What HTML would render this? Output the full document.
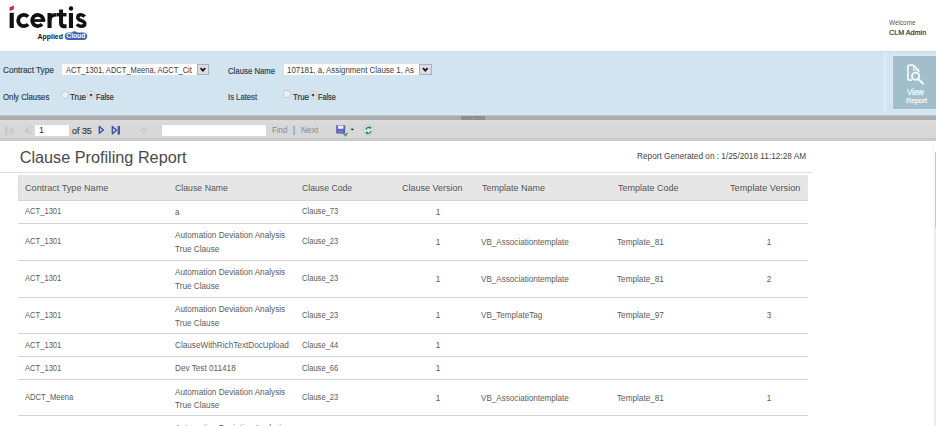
<!DOCTYPE html>
<html><head><meta charset="utf-8"><style>
html,body{margin:0;padding:0;}
body{width:936px;height:426px;overflow:hidden;position:relative;background:#fff;font-family:"Liberation Sans", sans-serif;}
.t{position:absolute;white-space:nowrap;}
.s{-webkit-text-stroke:0.2px currentColor;}
.r{position:absolute;}
</style></head><body>
<div class="r" style="left:0px;top:51px;width:936px;height:64px;background:#d3e4f1;"></div>
<div class="r" style="left:0px;top:51px;width:936px;height:1px;background:#cdd9e3;"></div>
<div class="r" style="left:0px;top:113px;width:936px;height:2px;background:#d9e7f3;"></div>
<div class="r" style="left:0px;top:115px;width:936px;height:5px;background:linear-gradient(#c6d0d7 0px,#b2b7bb 1px,#a9abae 2px,#aaacae 4.5px,#c4c5c6 5px);"></div>
<div class="r" style="left:0px;top:120px;width:936px;height:18px;background:linear-gradient(#dbdbdb 0px,#dbdbdb 3px,#d8d8d8 4px);"></div>
<div class="r" style="left:0px;top:137px;width:936px;height:1px;background:#d5d5d5;"></div>
<div class="r" style="left:0px;top:138px;width:936px;height:3px;background:#c9c9c9;"></div>
<div class="r" style="left:883px;top:52px;width:4px;height:63px;background:linear-gradient(90deg,#d6e7f2,#dcebf5 50%,#d6e7f2);"></div>
<div class="r" style="left:892px;top:55px;width:44px;height:55px;background:#d9eaf4;"></div>
<div class="r" style="left:893px;top:56px;width:43px;height:53px;background:#a0bfca;"></div>
<div class="r" style="left:935px;top:152px;width:1px;height:76px;background:#c6c6c6;"></div>
<div class="r" style="left:933px;top:142px;width:1px;height:86px;background:#f3f3f3;"></div>
<div class="r" style="left:934px;top:228px;width:2px;height:198px;background:linear-gradient(90deg,#f4f4f4,#e6e6e6);"></div>
<div class="r" style="left:461px;top:116px;width:24px;height:4px;background:#8c8f92;"></div>
<div class="r" style="left:472.5px;top:117.5px;width:1.5px;height:1.5px;background:#d8d8d8;"></div>
<div class="t " style="left:888.5px;top:19.75px;font-size:6.91px;line-height:6.91px;color:#555;font-weight:normal;transform:scaleX(0.9259);transform-origin:0 0;">Welcome</div>
<div class="t s" style="left:888.5px;top:28.82px;font-size:7.78px;line-height:7.78px;color:#333;font-weight:normal;transform:scaleX(0.9259);transform-origin:0 0;">CLM Admin</div>
<div class="t s" style="left:3px;top:66.20px;font-size:8.86px;line-height:8.86px;color:#34444f;font-weight:normal;transform:scaleX(0.9259);transform-origin:0 0;">Contract Type</div>
<div class="t s" style="left:3px;top:93.37px;font-size:8.42px;line-height:8.42px;color:#34444f;font-weight:normal;transform:scaleX(0.9259);transform-origin:0 0;">Only Clauses</div>
<div class="t s" style="left:228.3px;top:66.57px;font-size:8.42px;line-height:8.42px;color:#34444f;font-weight:normal;transform:scaleX(0.9259);transform-origin:0 0;">Clause Name</div>
<div class="t s" style="left:228.3px;top:93.46px;font-size:8.32px;line-height:8.32px;color:#34444f;font-weight:normal;transform:scaleX(0.9259);transform-origin:0 0;">Is Latest</div>
<div class="r" style="left:62px;top:64px;width:135px;height:11px;background:#fff;"></div>
<div class="t " style="left:65.8px;top:66.44px;font-size:8.46px;line-height:8.46px;color:#3a3a3a;font-weight:normal;transform:scaleX(0.8929);transform-origin:0 0;">ACT_1301, ADCT_Meena, AGCT_Cit</div>
<div class="r" style="left:197px;top:63.5px;width:11.5px;height:11.5px;background:#dcdce6;border:1px solid #aeaeba;box-sizing:border-box;"></div>
<div class="r" style="left:283.5px;top:64px;width:135.5px;height:11px;background:#fff;"></div>
<div class="t " style="left:287.2px;top:66.11px;font-size:8.85px;line-height:8.85px;color:#3a3a3a;font-weight:normal;transform:scaleX(0.8929);transform-origin:0 0;">107181, a, Assignment Clause 1, As</div>
<div class="r" style="left:419px;top:63.5px;width:12.5px;height:11.5px;background:#dcdce6;border:1px solid #aeaeba;box-sizing:border-box;"></div>
<svg class="r" style="left:0;top:60px" width="440" height="20" viewBox="0 60 440 20"><path d="M 200.6 68.2 L 202.9 70.6 L 205.2 68.2" fill="none" stroke="#1a1a1a" stroke-width="1.9"/><path d="M 423 68.2 L 425.3 70.6 L 427.6 68.2" fill="none" stroke="#1a1a1a" stroke-width="1.9"/></svg>
<svg class="r" style="left:60px;top:89.5px" width="10" height="10"><circle cx="5" cy="5" r="3.7" fill="#eef1f4" stroke="#c3c8cd" stroke-width="1"/></svg>
<div class="t s" style="left:70px;top:93.08px;font-size:8.53px;line-height:8.53px;color:#333;font-weight:normal;transform:scaleX(0.9259);transform-origin:0 0;">True</div>
<svg class="r" style="left:86px;top:90px" width="10" height="10"><circle cx="5" cy="5" r="3.7" fill="#eef1f4" stroke="#c3c8cd" stroke-width="1"/><circle cx="5" cy="5" r="1.6" fill="#555"/></svg>
<div class="t s" style="left:96px;top:93.13px;font-size:8.47px;line-height:8.47px;color:#333;font-weight:normal;transform:scaleX(0.8547);transform-origin:0 0;">False</div>
<svg class="r" style="left:282.3px;top:89.4px" width="10" height="10"><circle cx="5" cy="5" r="3.7" fill="#eef1f4" stroke="#c3c8cd" stroke-width="1"/></svg>
<div class="t s" style="left:293px;top:93.08px;font-size:8.53px;line-height:8.53px;color:#333;font-weight:normal;transform:scaleX(0.9259);transform-origin:0 0;">True</div>
<svg class="r" style="left:308.3px;top:89.8px" width="10" height="10"><circle cx="5" cy="5" r="3.7" fill="#eef1f4" stroke="#c3c8cd" stroke-width="1"/><circle cx="5" cy="5" r="1.6" fill="#555"/></svg>
<div class="t s" style="left:318.3px;top:93.13px;font-size:8.47px;line-height:8.47px;color:#333;font-weight:normal;transform:scaleX(0.8547);transform-origin:0 0;">False</div>
<div class="r" style="left:34.5px;top:124.7px;width:34px;height:11px;background:#fff;"></div>
<div class="t " style="left:39px;top:125.37px;font-size:9.72px;line-height:9.72px;color:#333;font-weight:normal;transform:scaleX(0.9259);transform-origin:0 0;">1</div>
<div class="t s" style="left:72.1px;top:125.56px;font-size:9.61px;line-height:9.61px;color:#3a3a3a;font-weight:normal;transform:scaleX(0.9259);transform-origin:0 0;">of 35</div>
<div class="r" style="left:162.3px;top:124.8px;width:103.7px;height:10.8px;background:#fff;"></div>
<div class="t " style="left:271.7px;top:125.98px;font-size:8.53px;line-height:8.53px;color:#8a8a8a;font-weight:normal;transform:scaleX(0.9259);transform-origin:0 0;">Find</div>
<div class="t " style="left:293px;top:125.89px;font-size:8.64px;line-height:8.64px;color:#666;font-weight:normal;transform:scaleX(0.9259);transform-origin:0 0;">|</div>
<div class="t " style="left:300.8px;top:125.52px;font-size:9.07px;line-height:9.07px;color:#8a8a8a;font-weight:normal;transform:scaleX(0.9259);transform-origin:0 0;">Next</div>
<svg class="r" style="left:0;top:120px" width="400" height="20" viewBox="0 120 400 20">
<rect x="5.3" y="126.5" width="2" height="8.5" fill="#c4c4c4"/>
<polygon points="13.3,126.5 8,130.8 13.3,135" fill="#cbcbcb"/>
<polygon points="28.5,126.5 24.3,130.8 28.5,135" fill="#c6c6c6"/>
<rect x="28.5" y="126.5" width="4" height="8.5" fill="#d2d2d2"/>
<polygon points="99.3,126.5 103.5,129.9 99.3,133.3" fill="#b8c8f0" stroke="#3a4f9e" stroke-width="1.3" stroke-linejoin="round"/>
<polygon points="112.3,126.5 116.6,130.2 112.3,133.9" fill="#b8c8f0" stroke="#3a4f9e" stroke-width="1.3" stroke-linejoin="round"/>
<rect x="117.6" y="126" width="2.4" height="8.5" fill="#3a5ca8"/>
<path d="M 140.5 131 L 143 128 L 145 130.5 L 143 134" fill="none" stroke="#c8c8c8" stroke-width="1.4"/>
<rect x="336.2" y="125.2" width="9" height="8.3" fill="#5a63b8"/>
<rect x="338" y="125.6" width="5.4" height="3.2" fill="#eef0ff"/>
<rect x="338.4" y="130.2" width="4.5" height="3.3" fill="#6d79c8"/>
<path d="M 342.5 133 L 346.5 136 M 344.8 136 L 347.5 133" stroke="#4a9a5a" stroke-width="1.4" fill="none"/>
<polygon points="350.6,128.8 354,128.8 352.3,130.6" fill="#111"/>
<circle cx="368.5" cy="130.3" r="5" fill="#d3ece4" stroke="#a9cfc6" stroke-width="0.9"/>
<path d="M 366 129.8 C 366 127.8, 368 126.9, 370 127.6 M 371 130.8 C 371 132.8, 369 133.7, 367 133" fill="none" stroke="#2e6e48" stroke-width="1.2"/>
<polygon points="369.5,126.2 371.8,128 369.3,129" fill="#2e6e48"/>
<polygon points="367.5,134.4 365.2,132.6 367.7,131.6" fill="#2e6e48"/>
</svg>
<div class="t " style="left:19.7px;top:148.55px;font-size:16.24px;line-height:16.24px;color:#4a4a4a;font-weight:normal;">Clause Profiling Report</div>
<div class="t " style="left:637.1px;top:152.46px;font-size:8.91px;line-height:8.91px;color:#444;font-weight:normal;transform:scaleX(0.9259);transform-origin:0 0;">Report Generated on : 1/25/2018 11:12:28 AM</div>
<div class="r" style="left:0px;top:172px;width:813px;height:1px;background:#dedede;"></div>
<div class="r" style="left:18px;top:175px;width:790px;height:25px;background:#e6e6e6;"></div>
<div class="r" style="left:18px;top:175px;width:4px;height:25px;background:linear-gradient(90deg,#d9d9d9,#e2e2e2 1px,#e4e4e4 3px,#e6e6e6);"></div>
<div class="r" style="left:18px;top:200px;width:790px;height:1px;background:#d4d4d4;"></div>
<div class="t " style="left:25px;top:182.98px;font-size:9.83px;line-height:9.83px;color:#555;font-weight:normal;transform:scaleX(0.9259);transform-origin:0 0;">Contract Type Name</div>
<div class="t " style="left:174.5px;top:183.30px;font-size:9.45px;line-height:9.45px;color:#555;font-weight:normal;transform:scaleX(0.9259);transform-origin:0 0;">Clause Name</div>
<div class="t " style="left:301.5px;top:183.35px;font-size:9.40px;line-height:9.40px;color:#555;font-weight:normal;transform:scaleX(0.9259);transform-origin:0 0;">Clause Code</div>
<div class="t " style="left:402.4px;top:183.07px;font-size:9.72px;line-height:9.72px;color:#555;font-weight:normal;transform:scaleX(0.9259);transform-origin:0 0;">Clause Version</div>
<div class="t " style="left:481.5px;top:183.07px;font-size:9.72px;line-height:9.72px;color:#555;font-weight:normal;transform:scaleX(0.9259);transform-origin:0 0;">Template Name</div>
<div class="t " style="left:617.6px;top:183.07px;font-size:9.72px;line-height:9.72px;color:#555;font-weight:normal;transform:scaleX(0.9259);transform-origin:0 0;">Template Code</div>
<div class="t " style="left:730.4px;top:182.89px;font-size:9.94px;line-height:9.94px;color:#555;font-weight:normal;transform:scaleX(0.9259);transform-origin:0 0;">Template Version</div>
<div class="r" style="left:18px;top:223px;width:790px;height:1px;background:#d2d2d2;"></div>
<div class="r" style="left:18px;top:260px;width:790px;height:1px;background:#d2d2d2;"></div>
<div class="r" style="left:18px;top:297px;width:790px;height:1px;background:#d2d2d2;"></div>
<div class="r" style="left:18px;top:333px;width:790px;height:1px;background:#d2d2d2;"></div>
<div class="r" style="left:18px;top:356px;width:790px;height:1px;background:#d2d2d2;"></div>
<div class="r" style="left:18px;top:379px;width:790px;height:1px;background:#d2d2d2;"></div>
<div class="r" style="left:18px;top:415px;width:790px;height:1px;background:#d2d2d2;"></div>
<div class="t " style="left:25px;top:208.15px;font-size:8.21px;line-height:8.21px;color:#5c5c5c;font-weight:normal;transform:scaleX(0.9259);transform-origin:0 0;">ACT_1301</div>
<div class="t " style="left:174.5px;top:207.60px;font-size:8.86px;line-height:8.86px;color:#5c5c5c;font-weight:normal;transform:scaleX(0.9259);transform-origin:0 0;">a</div>
<div class="t " style="left:301.5px;top:208.15px;font-size:8.21px;line-height:8.21px;color:#5c5c5c;font-weight:normal;transform:scaleX(0.9259);transform-origin:0 0;">Clause_73</div>
<div class="t" style="left:338px;width:200px;text-align:center;top:207.60px;font-size:8.86px;line-height:8.86px;color:#5c5c5c;font-weight:normal;transform:scaleX(0.9259);transform-origin:50% 0;">1</div>
<div class="t " style="left:25px;top:238.15px;font-size:8.21px;line-height:8.21px;color:#5c5c5c;font-weight:normal;transform:scaleX(0.9259);transform-origin:0 0;">ACT_1301</div>
<div class="t " style="left:174.5px;top:231.40px;font-size:8.86px;line-height:8.86px;color:#5c5c5c;font-weight:normal;transform:scaleX(0.9259);transform-origin:0 0;">Automation Deviation Analysis</div>
<div class="t " style="left:174.5px;top:245.10px;font-size:8.86px;line-height:8.86px;color:#5c5c5c;font-weight:normal;transform:scaleX(0.9259);transform-origin:0 0;">True Clause</div>
<div class="t " style="left:301.5px;top:238.15px;font-size:8.21px;line-height:8.21px;color:#5c5c5c;font-weight:normal;transform:scaleX(0.9259);transform-origin:0 0;">Clause_23</div>
<div class="t" style="left:338px;width:200px;text-align:center;top:237.60px;font-size:8.86px;line-height:8.86px;color:#5c5c5c;font-weight:normal;transform:scaleX(0.9259);transform-origin:50% 0;">1</div>
<div class="t " style="left:480.8px;top:237.69px;font-size:8.75px;line-height:8.75px;color:#5c5c5c;font-weight:normal;transform:scaleX(0.9259);transform-origin:0 0;">VB_Associationtemplate</div>
<div class="t " style="left:617.2px;top:237.60px;font-size:8.86px;line-height:8.86px;color:#5c5c5c;font-weight:normal;transform:scaleX(0.9259);transform-origin:0 0;">Template_81</div>
<div class="t" style="left:669.2px;width:200px;text-align:center;top:237.60px;font-size:8.86px;line-height:8.86px;color:#5c5c5c;font-weight:normal;transform:scaleX(0.9259);transform-origin:50% 0;">1</div>
<div class="t " style="left:25px;top:275.15px;font-size:8.21px;line-height:8.21px;color:#5c5c5c;font-weight:normal;transform:scaleX(0.9259);transform-origin:0 0;">ACT_1301</div>
<div class="t " style="left:174.5px;top:268.40px;font-size:8.86px;line-height:8.86px;color:#5c5c5c;font-weight:normal;transform:scaleX(0.9259);transform-origin:0 0;">Automation Deviation Analysis</div>
<div class="t " style="left:174.5px;top:282.10px;font-size:8.86px;line-height:8.86px;color:#5c5c5c;font-weight:normal;transform:scaleX(0.9259);transform-origin:0 0;">True Clause</div>
<div class="t " style="left:301.5px;top:275.15px;font-size:8.21px;line-height:8.21px;color:#5c5c5c;font-weight:normal;transform:scaleX(0.9259);transform-origin:0 0;">Clause_23</div>
<div class="t" style="left:338px;width:200px;text-align:center;top:274.60px;font-size:8.86px;line-height:8.86px;color:#5c5c5c;font-weight:normal;transform:scaleX(0.9259);transform-origin:50% 0;">1</div>
<div class="t " style="left:480.8px;top:274.69px;font-size:8.75px;line-height:8.75px;color:#5c5c5c;font-weight:normal;transform:scaleX(0.9259);transform-origin:0 0;">VB_Associationtemplate</div>
<div class="t " style="left:617.2px;top:274.60px;font-size:8.86px;line-height:8.86px;color:#5c5c5c;font-weight:normal;transform:scaleX(0.9259);transform-origin:0 0;">Template_81</div>
<div class="t" style="left:669.2px;width:200px;text-align:center;top:274.60px;font-size:8.86px;line-height:8.86px;color:#5c5c5c;font-weight:normal;transform:scaleX(0.9259);transform-origin:50% 0;">2</div>
<div class="t " style="left:25px;top:311.90px;font-size:8.21px;line-height:8.21px;color:#5c5c5c;font-weight:normal;transform:scaleX(0.9259);transform-origin:0 0;">ACT_1301</div>
<div class="t " style="left:174.5px;top:305.15px;font-size:8.86px;line-height:8.86px;color:#5c5c5c;font-weight:normal;transform:scaleX(0.9259);transform-origin:0 0;">Automation Deviation Analysis</div>
<div class="t " style="left:174.5px;top:318.85px;font-size:8.86px;line-height:8.86px;color:#5c5c5c;font-weight:normal;transform:scaleX(0.9259);transform-origin:0 0;">True Clause</div>
<div class="t " style="left:301.5px;top:311.90px;font-size:8.21px;line-height:8.21px;color:#5c5c5c;font-weight:normal;transform:scaleX(0.9259);transform-origin:0 0;">Clause_23</div>
<div class="t" style="left:338px;width:200px;text-align:center;top:311.35px;font-size:8.86px;line-height:8.86px;color:#5c5c5c;font-weight:normal;transform:scaleX(0.9259);transform-origin:50% 0;">1</div>
<div class="t " style="left:480.8px;top:311.44px;font-size:8.75px;line-height:8.75px;color:#5c5c5c;font-weight:normal;transform:scaleX(0.9259);transform-origin:0 0;">VB_TemplateTag</div>
<div class="t " style="left:617.2px;top:311.35px;font-size:8.86px;line-height:8.86px;color:#5c5c5c;font-weight:normal;transform:scaleX(0.9259);transform-origin:0 0;">Template_97</div>
<div class="t" style="left:669.2px;width:200px;text-align:center;top:311.35px;font-size:8.86px;line-height:8.86px;color:#5c5c5c;font-weight:normal;transform:scaleX(0.9259);transform-origin:50% 0;">3</div>
<div class="t " style="left:25px;top:341.70px;font-size:8.21px;line-height:8.21px;color:#5c5c5c;font-weight:normal;transform:scaleX(0.9259);transform-origin:0 0;">ACT_1301</div>
<div class="t " style="left:174.5px;top:341.15px;font-size:8.86px;line-height:8.86px;color:#5c5c5c;font-weight:normal;transform:scaleX(0.9259);transform-origin:0 0;">ClauseWithRichTextDocUpload</div>
<div class="t " style="left:301.5px;top:341.70px;font-size:8.21px;line-height:8.21px;color:#5c5c5c;font-weight:normal;transform:scaleX(0.9259);transform-origin:0 0;">Clause_44</div>
<div class="t" style="left:338px;width:200px;text-align:center;top:341.15px;font-size:8.86px;line-height:8.86px;color:#5c5c5c;font-weight:normal;transform:scaleX(0.9259);transform-origin:50% 0;">1</div>
<div class="t " style="left:25px;top:364.75px;font-size:8.21px;line-height:8.21px;color:#5c5c5c;font-weight:normal;transform:scaleX(0.9259);transform-origin:0 0;">ACT_1301</div>
<div class="t " style="left:174.5px;top:364.20px;font-size:8.86px;line-height:8.86px;color:#5c5c5c;font-weight:normal;transform:scaleX(0.9259);transform-origin:0 0;">Dev Test 011418</div>
<div class="t " style="left:301.5px;top:364.75px;font-size:8.21px;line-height:8.21px;color:#5c5c5c;font-weight:normal;transform:scaleX(0.9259);transform-origin:0 0;">Clause_66</div>
<div class="t" style="left:338px;width:200px;text-align:center;top:364.20px;font-size:8.86px;line-height:8.86px;color:#5c5c5c;font-weight:normal;transform:scaleX(0.9259);transform-origin:50% 0;">1</div>
<div class="t " style="left:25px;top:394.30px;font-size:8.21px;line-height:8.21px;color:#5c5c5c;font-weight:normal;transform:scaleX(0.9259);transform-origin:0 0;">ADCT_Meena</div>
<div class="t " style="left:174.5px;top:387.55px;font-size:8.86px;line-height:8.86px;color:#5c5c5c;font-weight:normal;transform:scaleX(0.9259);transform-origin:0 0;">Automation Deviation Analysis</div>
<div class="t " style="left:174.5px;top:401.25px;font-size:8.86px;line-height:8.86px;color:#5c5c5c;font-weight:normal;transform:scaleX(0.9259);transform-origin:0 0;">True Clause</div>
<div class="t " style="left:301.5px;top:394.30px;font-size:8.21px;line-height:8.21px;color:#5c5c5c;font-weight:normal;transform:scaleX(0.9259);transform-origin:0 0;">Clause_23</div>
<div class="t" style="left:338px;width:200px;text-align:center;top:393.75px;font-size:8.86px;line-height:8.86px;color:#5c5c5c;font-weight:normal;transform:scaleX(0.9259);transform-origin:50% 0;">1</div>
<div class="t " style="left:480.8px;top:393.84px;font-size:8.75px;line-height:8.75px;color:#5c5c5c;font-weight:normal;transform:scaleX(0.9259);transform-origin:0 0;">VB_Associationtemplate</div>
<div class="t " style="left:617.2px;top:393.75px;font-size:8.86px;line-height:8.86px;color:#5c5c5c;font-weight:normal;transform:scaleX(0.9259);transform-origin:0 0;">Template_81</div>
<div class="t" style="left:669.2px;width:200px;text-align:center;top:393.75px;font-size:8.86px;line-height:8.86px;color:#5c5c5c;font-weight:normal;transform:scaleX(0.9259);transform-origin:50% 0;">1</div>
<div class="t " style="left:174.5px;top:423.85px;font-size:8.86px;line-height:8.86px;color:#5c5c5c;font-weight:normal;transform:scaleX(0.9259);transform-origin:0 0;">Automation Deviation Analysis</div>
<div class="t " style="left:174.5px;top:437.55px;font-size:8.86px;line-height:8.86px;color:#5c5c5c;font-weight:normal;transform:scaleX(0.9259);transform-origin:0 0;">True Clause</div>
<svg class="r" style="left:0;top:0" width="100" height="45" viewBox="0 0 100 45">
<polygon points="9.6,7.3 13.8,5.6 13.8,9.5 9.6,11.1" fill="#e2203c"/>
<rect x="9.6" y="12.8" width="4.2" height="15.2" fill="#111"/>
<path d="M 28.05 16.77 A 5.65 5.65 0 1 0 28.05 24.33" fill="none" stroke="#111" stroke-width="3.8"/>
<path d="M 43.3 20.5 A 5.6 5.6 0 1 0 41.99 24.1" fill="none" stroke="#111" stroke-width="3.8"/>
<rect x="32" y="19.2" width="13.2" height="2.7" fill="#111"/>
<rect x="47.5" y="13" width="4.1" height="15" fill="#111"/>
<path d="M 49.55 21 C 49.55 16.5, 52 14.8, 56.6 14.8" fill="none" stroke="#111" stroke-width="3.6"/>
<path d="M 61.05 9.4 L 61.05 23.2 C 61.05 25.4, 62.3 26.2, 64.2 26.2 L 66.6 26.2" fill="none" stroke="#111" stroke-width="4"/>
<rect x="56.8" y="13" width="9.7" height="3.4" fill="#111"/>
<circle cx="71" cy="8.5" r="2.2" fill="#111"/>
<rect x="68.9" y="13" width="4.1" height="15" fill="#111"/>
<path d="M 84.6 16.6 C 83.6 15.3, 82.2 14.75, 80.8 14.75 C 78.9 14.75, 77.8 15.9, 77.8 17.4 C 77.8 19.5, 79.9 20.1, 81.4 20.6 C 83.1 21.1, 84.8 21.8, 84.8 23.7 C 84.8 25.3, 83.3 26.25, 81 26.25 C 79.3 26.25, 77.9 25.5, 77 24.3" fill="none" stroke="#111" stroke-width="3.5"/>
<rect x="64.8" y="32.6" width="22.3" height="7.3" rx="3.6" fill="#3466bc"/>
<ellipse cx="74.4" cy="32.7" rx="2.6" ry="1.5" fill="#3466bc"/>
</svg>
<div class="t " style="left:37.6px;top:34.06px;font-size:6.90px;line-height:6.90px;color:#111;font-weight:bold;">Applied</div>
<div class="t " style="left:66.3px;top:33.23px;font-size:6.70px;line-height:6.70px;color:#fff;font-weight:bold;">Cloud</div>
<svg class="r" style="left:893px;top:56px" width="43" height="53" viewBox="893 56 43 53">
<path d="M 913.2 65.2 L 909.6 65.2 C 908.5 65.2, 907.9 66, 907.9 67 L 907.9 78.3 C 907.9 79.4, 908.6 80.1, 909.6 80.1 L 911.8 80.1" fill="none" stroke="#f4f8fa" stroke-width="1.7"/>
<path d="M 913.2 65.2 L 918.6 70.4 L 918.6 72.2" fill="none" stroke="#f4f8fa" stroke-width="1.7"/>
<path d="M 913.6 65.6 L 913.6 70 L 918.2 70" fill="none" stroke="#f4f8fa" stroke-width="1.2"/>
<circle cx="915.6" cy="76.2" r="3.6" fill="none" stroke="#f4f8fa" stroke-width="1.9"/>
<path d="M 918.2 78.8 L 922.9 83.5" stroke="#f4f8fa" stroke-width="2.2" stroke-linecap="round"/>
</svg>
<div class="t " style="left:906.7px;top:87.97px;font-size:8.42px;line-height:8.42px;color:#f4f8fa;font-weight:normal;transform:scaleX(0.9259);transform-origin:0 0;-webkit-text-stroke:0.25px #f4f8fa;">View</div>
<div class="t " style="left:906px;top:96.80px;font-size:7.56px;line-height:7.56px;color:#f4f8fa;font-weight:normal;transform:scaleX(0.9259);transform-origin:0 0;-webkit-text-stroke:0.25px #f4f8fa;">Report</div>
</body></html>
